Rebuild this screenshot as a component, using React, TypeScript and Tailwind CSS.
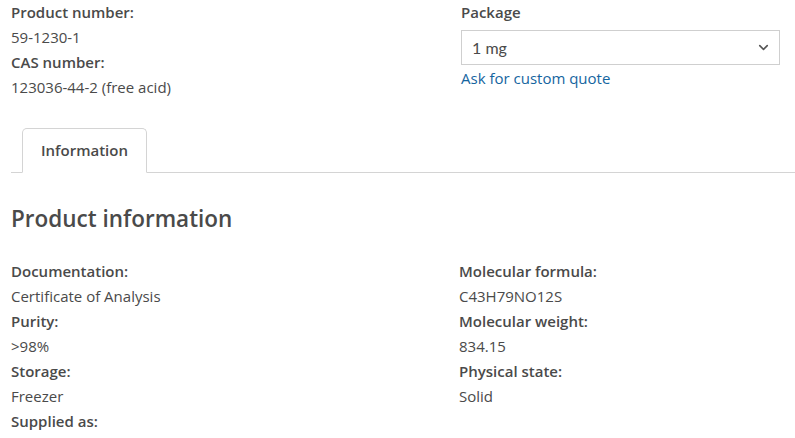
import { ChevronDown } from 'lucide-react'

type Field = { label: string; value?: string }

const LEFT: Field[] = [
  { label: 'Documentation:', value: 'Certificate of Analysis' },
  { label: 'Purity:', value: '>98%' },
  { label: 'Storage:', value: 'Freezer' },
  { label: 'Supplied as:' },
]

const RIGHT: Field[] = [
  { label: 'Molecular formula:', value: 'C43H79NO12S' },
  { label: 'Molecular weight:', value: '834.15' },
  { label: 'Physical state:', value: 'Solid' },
]

function FieldList({ fields }: { fields: Field[] }) {
  return (
    <dl>
      {fields.map((f) => (
        <div key={f.label}>
          <dt className="font-semibold">{f.label}</dt>
          {f.value && <dd>{f.value}</dd>}
        </div>
      ))}
    </dl>
  )
}

export default function App() {
  return (
    <div
      className="h-[438px] w-[795px] overflow-hidden bg-white text-[15px] leading-[25px] text-[#4a4a4a]"
      style={{ fontFamily: '"Open Sans", "Liberation Sans", sans-serif' }}
    >
      {/* product summary */}
      <div className="grid grid-cols-[450px_1fr] pl-[11px] pr-[15px]">
        <FieldList
          fields={[
            { label: 'Product number:', value: '59-1230-1' },
            { label: 'CAS number:', value: '123036-44-2 (free acid)' },
          ]}
        />
        <div>
          <div className="font-semibold">Package</div>
          <div className="mt-[5px] flex h-[35px] items-center justify-between border border-[#cfcfcf] pl-[10px] pr-[8px]">
            <span style={{ fontFamily: 'Lato, "Open Sans", sans-serif' }} className="text-[16px]">1 mg</span>
            <ChevronDown size={15} strokeWidth={2.5} className="text-[#555]" />
          </div>
          <a href="#" className="block leading-[26px] text-[#1565a0]">
            Ask for custom quote
          </a>
        </div>
      </div>

      {/* tabs */}
      <div className="ml-[11px] mt-[28px] flex border-b border-[#d4d4d4] pl-[11px]">
        <div className="-mb-px flex h-[45px] items-center rounded-t-[5px] border border-b-white border-[#d4d4d4] bg-white px-[18px] font-semibold">
          Information
        </div>
      </div>

      {/* product information */}
      <div className="px-[11px]">
        <h2 className="mt-[30px] text-[22.5px] font-semibold leading-[32px]">Product information</h2>
        <div className="mt-[24px] grid grid-cols-[448px_1fr]">
          <FieldList fields={LEFT} />
          <FieldList fields={RIGHT} />
        </div>
      </div>
    </div>
  )
}
